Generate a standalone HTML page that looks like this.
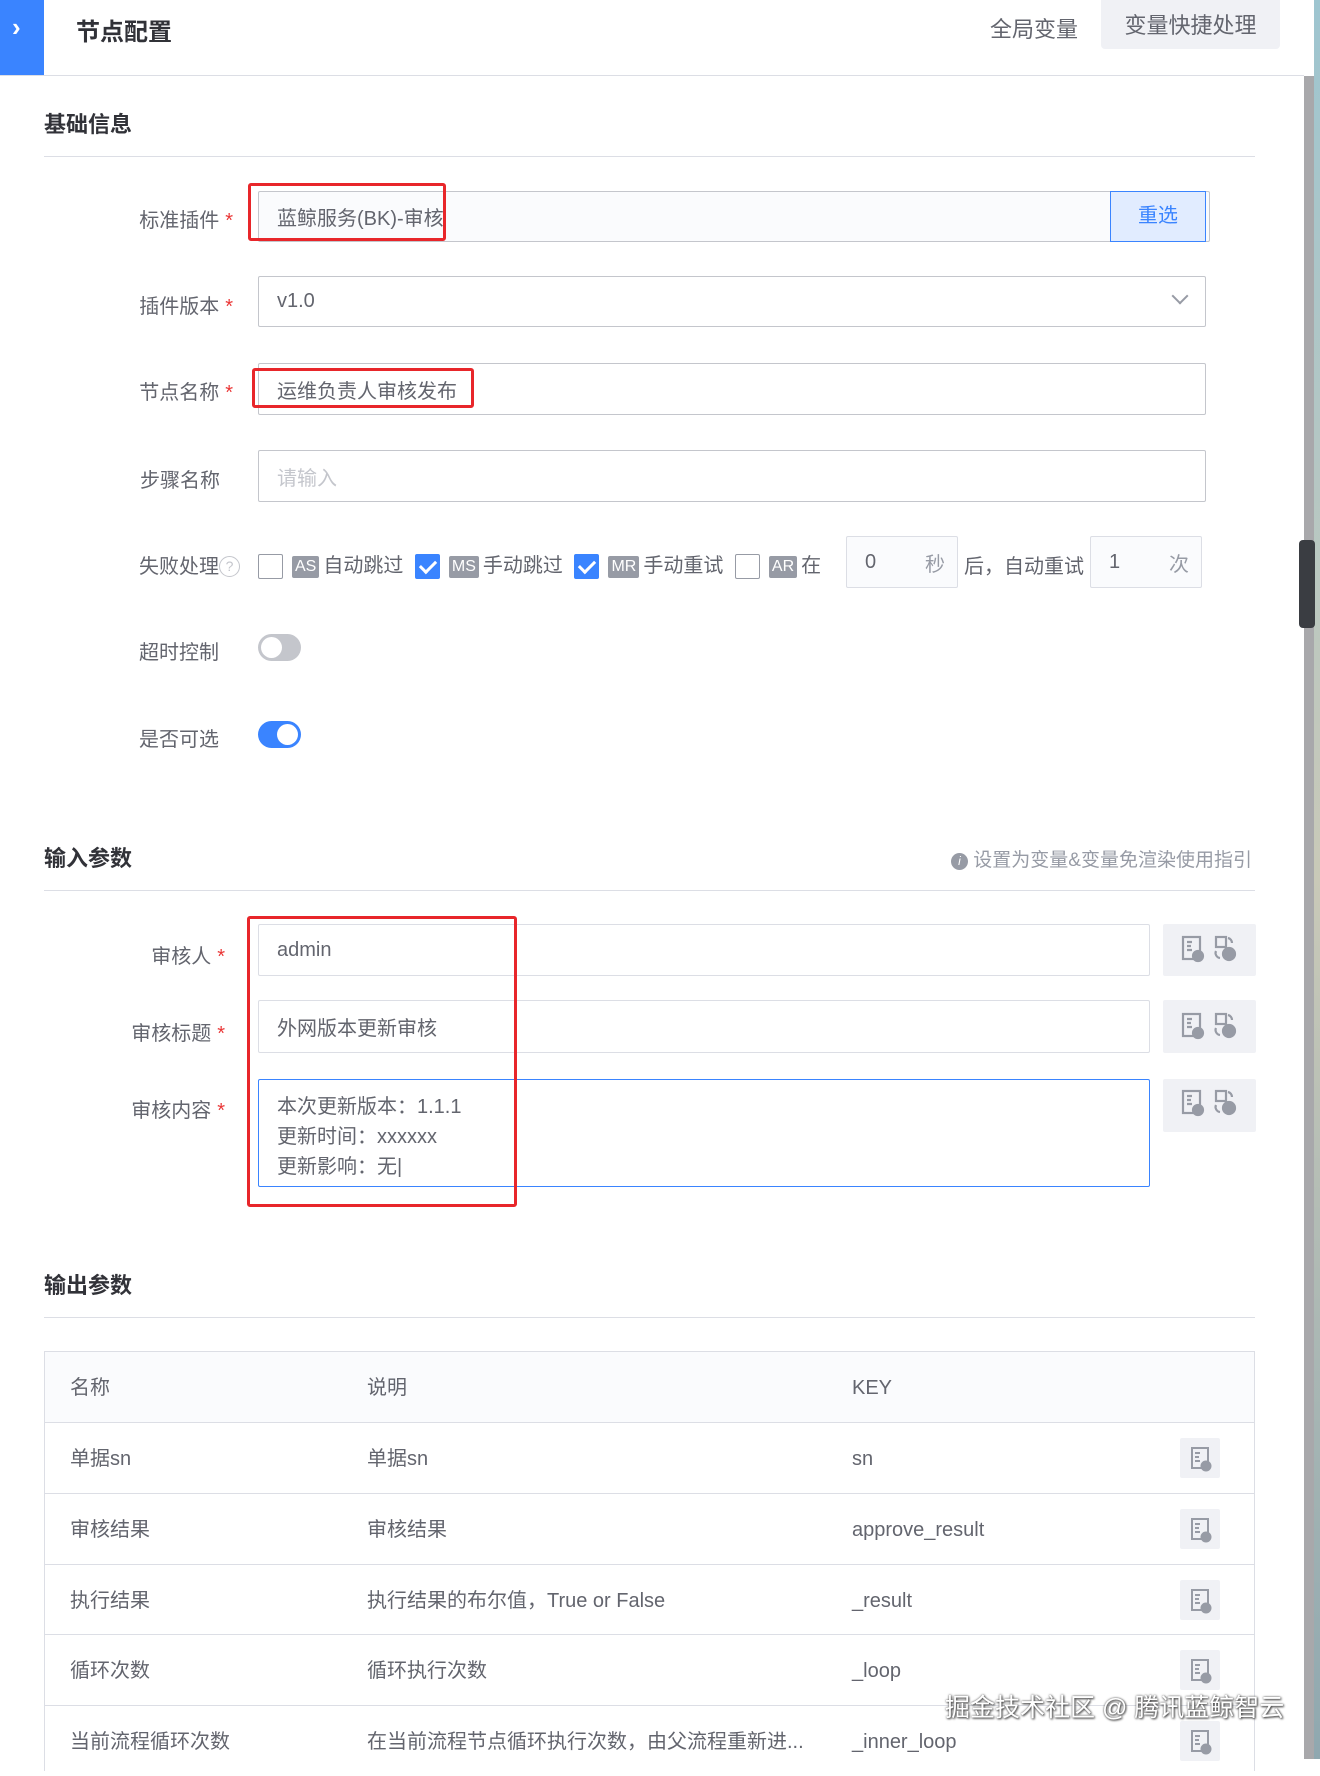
<!DOCTYPE html>
<html><head><meta charset="utf-8"><style>
*{box-sizing:border-box;margin:0;padding:0}
body{width:1320px;height:1759px;overflow:hidden;background:#fff;font-family:"Liberation Sans","Noto Sans CJK SC",sans-serif;color:#63656e;position:relative;font-size:20px}
.a{position:absolute}
.lbl{position:absolute;text-align:right;width:200px;font-size:20px;color:#63656e}
.req{color:#ea3636;margin-left:6px}
.inp{position:absolute;border:1px solid #c4c6cc;border-radius:2px;background:#fff;padding-left:18px;display:flex;align-items:center;font-size:20px;color:#63656e}
.h{position:absolute;font-weight:bold;font-size:22px;color:#313238}
.hr{position:absolute;left:44px;width:1211px;height:1px;background:#dcdee5}
.cb{display:inline-block;width:25px;height:25px;border:1px solid #979ba5;border-radius:2px;vertical-align:middle;background:#fff}
.cb.on{background:#3a84ff;border-color:#3a84ff;position:relative}
.cb.on:after{content:"";position:absolute;left:7px;top:2px;width:7px;height:13px;border:solid #fff;border-width:0 3px 3px 0;transform:rotate(45deg)}
.tag{display:inline-block;background:#979ba5;color:#fff;font-size:16px;border-radius:2px;padding:0 3px;line-height:22px;vertical-align:middle;margin:0 4px 0 9px}
.ib{position:absolute;left:1163px;width:93px;background:#f0f1f5;border-radius:2px}
.red{position:absolute;border:3px solid #e8262a;border-radius:3px}
.row{position:absolute;left:44px;width:1211px;height:71px;border-top:1px solid #dcdee5;font-size:20px}
.row span{position:absolute;top:22px;line-height:28px}
.tb{position:absolute;left:1136px;top:15px;width:40px;height:40px;background:#f0f1f5;border-radius:2px}
.tb svg{position:absolute;left:10px;top:8px}
</style></head><body>
<div class="a" style="left:0;top:0;width:44px;height:75px;background:#3a84ff;color:#fff;font-size:26px;font-weight:bold;padding:12px 0 0 12px">›</div>
<div class="a" style="left:76px;top:12px;font-size:24px;font-weight:bold;color:#313238">节点配置</div>
<div class="a" style="left:990px;top:12px;font-size:22px;color:#63656e">全局变量</div>
<div class="a" style="left:1101px;top:0;width:179px;height:49px;background:#f0f1f5;border-radius:0 0 4px 4px;font-size:22px;color:#63656e;text-align:center;line-height:52px">变量快捷处理</div>
<div class="a" style="left:0;top:75px;width:1304px;height:1px;background:#dcdee5"></div>
<div class="a" style="left:1304px;top:76px;width:10px;height:1683px;background:#a8a8ab"></div>
<div class="a" style="left:1314px;top:0;width:6px;height:1759px;background:linear-gradient(#9ec5d0,#c9c9b8 50%,#8fa8b0)"></div>
<div class="a" style="left:1299px;top:540px;width:16px;height:88px;background:#3a3d42;border-radius:4px"></div>

<div class="h" style="left:44px;top:107px">基础信息</div>
<div class="hr" style="top:156px"></div>

<div class="lbl" style="left:33px;top:204px">标准插件<span class="req">*</span></div>
<div class="inp" style="left:258px;top:191px;width:952px;height:51px;background:#fafbfd">蓝鲸服务(BK)-审核</div>
<div class="a" style="left:1110px;top:191px;width:96px;height:51px;background:#e1ecff;border:1px solid #3a84ff;color:#3a84ff;text-align:center;line-height:49px">重选</div>
<div class="red" style="left:248px;top:183px;width:198px;height:58px"></div>

<div class="lbl" style="left:33px;top:290px">插件版本<span class="req">*</span></div>
<div class="inp" style="left:258px;top:276px;width:948px;height:51px">v1.0</div>
<div class="a" style="left:1174px;top:290px;width:12px;height:12px;border:solid #979ba5;border-width:0 2px 2px 0;transform:rotate(45deg)"></div>

<div class="lbl" style="left:33px;top:376px">节点名称<span class="req">*</span></div>
<div class="inp" style="left:258px;top:363px;width:948px;height:52px">运维负责人审核发布</div>
<div class="red" style="left:252px;top:368px;width:222px;height:40px"></div>

<div class="lbl" style="left:20px;top:464px">步骤名称</div>
<div class="inp" style="left:258px;top:450px;width:948px;height:52px;color:#c4c6cc">请输入</div>

<div class="a" style="left:139px;top:550px">失败处理<span style="display:inline-block;width:21px;height:21px;border:1px solid #c4c6cc;border-radius:50%;font-size:14px;text-align:center;line-height:19px;color:#c4c6cc;vertical-align:2px">?</span></div>
<div class="a" style="left:258px;top:549px;white-space:nowrap"><span class="cb"></span><span class="tag">AS</span>自动跳过 <span class="cb on" style="margin-left:6px"></span><span class="tag">MS</span>手动跳过 <span class="cb on" style="margin-left:6px"></span><span class="tag">MR</span>手动重试 <span class="cb" style="margin-left:6px"></span><span class="tag">AR</span>在</div>
<div class="inp" style="left:846px;top:536px;width:112px;height:52px;background:#fafbfd;border-color:#dcdee5">0<span style="position:absolute;right:12px;color:#979ba5">秒</span></div>
<div class="a" style="left:964px;top:550px">后，自动重试</div>
<div class="inp" style="left:1090px;top:536px;width:112px;height:52px;background:#fafbfd;border-color:#dcdee5">1<span style="position:absolute;right:12px;color:#979ba5">次</span></div>

<div class="a" style="left:139px;top:636px">超时控制</div>
<div class="a" style="left:258px;top:634px;width:43px;height:27px;background:#c4c6cc;border-radius:14px"><div class="a" style="left:3px;top:3px;width:21px;height:21px;background:#fff;border-radius:50%"></div></div>
<div class="a" style="left:139px;top:723px">是否可选</div>
<div class="a" style="left:258px;top:721px;width:43px;height:27px;background:#3a84ff;border-radius:14px"><div class="a" style="left:19px;top:3px;width:21px;height:21px;background:#fff;border-radius:50%"></div></div>

<div class="h" style="left:44px;top:841px">输入参数</div>
<div class="a" style="left:951px;top:845px;font-size:19px;color:#979ba5;white-space:nowrap"><span style="display:inline-block;width:17px;height:17px;border-radius:50%;background:#979ba5;color:#fff;font-size:12px;text-align:center;line-height:17px;vertical-align:1px;font-style:italic">i</span> 设置为变量&amp;变量免渲染使用指引</div>
<div class="hr" style="top:890px"></div>

<div class="lbl" style="left:25px;top:940px">审核人<span class="req">*</span></div>
<div class="inp" style="left:258px;top:924px;width:892px;height:52px;border-color:#dcdee5">admin</div>
<div class="lbl" style="left:25px;top:1017px">审核标题<span class="req">*</span></div>
<div class="inp" style="left:258px;top:1000px;width:892px;height:53px;border-color:#dcdee5">外网版本更新审核</div>
<div class="lbl" style="left:25px;top:1094px">审核内容<span class="req">*</span></div>
<div class="inp" style="left:258px;top:1079px;width:892px;height:108px;border-color:#3a84ff;align-items:flex-start;padding-top:12px;line-height:30px">本次更新版本：1.1.1<br>更新时间：xxxxxx<br>更新影响：无|</div>
<div class="ib" style="top:924px;height:52px"></div>
<div class="ib" style="top:1000px;height:53px"></div>
<div class="ib" style="top:1079px;height:53px"></div>
<svg class="a" style="left:1180px;top:933px" width="60" height="240" fill="none" stroke="#979ba5" stroke-width="2.2">
<defs><g id="ic"><rect x="3" y="4" width="17" height="22"/><path d="M7 9h5M7 13h4M7 17h5"/><circle cx="18" cy="23" r="5" fill="#979ba5"/><rect x="36" y="4" width="10" height="10"/><path d="M48 5a5 5 0 0 1 4 5M36 18a5 5 0 0 0 4 7"/><circle cx="49" cy="21" r="6" fill="#979ba5"/></g>
<g id="ic2"><rect x="2" y="2" width="16" height="20"/><path d="M5 7h5M5 11h4M5 15h5"/><circle cx="16" cy="20" r="4.5" fill="#979ba5"/></g></defs>
<use href="#ic"/><use href="#ic" y="77"/><use href="#ic" y="154"/>
</svg>
<div class="red" style="left:247px;top:916px;width:270px;height:291px"></div>

<div class="h" style="left:44px;top:1268px">输出参数</div>
<div class="hr" style="top:1317px"></div>

<div class="a" style="left:44px;top:1351px;width:1211px;height:420px;border:1px solid #dcdee5;border-bottom:none"></div>
<div class="a" style="left:45px;top:1352px;width:1209px;height:70px;background:#fafbfd"></div>
<div class="a" style="left:70px;top:1374px;line-height:28px">名称</div><div class="a" style="left:367px;top:1374px;line-height:28px">说明</div><div class="a" style="left:852px;top:1374px;line-height:28px">KEY</div>
<div class="row" style="top:1422px"><span style="left:26px">单据sn</span><span style="left:323px">单据sn</span><span style="left:808px">sn</span><div class="tb"><svg width="22" height="26" fill="none" stroke="#979ba5" stroke-width="2"><use href="#ic2"/></svg></div></div>
<div class="row" style="top:1493px"><span style="left:26px">审核结果</span><span style="left:323px">审核结果</span><span style="left:808px">approve_result</span><div class="tb"><svg width="22" height="26" fill="none" stroke="#979ba5" stroke-width="2"><use href="#ic2"/></svg></div></div>
<div class="row" style="top:1564px"><span style="left:26px">执行结果</span><span style="left:323px">执行结果的布尔值，True or False</span><span style="left:808px">_result</span><div class="tb"><svg width="22" height="26" fill="none" stroke="#979ba5" stroke-width="2"><use href="#ic2"/></svg></div></div>
<div class="row" style="top:1634px"><span style="left:26px">循环次数</span><span style="left:323px">循环执行次数</span><span style="left:808px">_loop</span><div class="tb"><svg width="22" height="26" fill="none" stroke="#979ba5" stroke-width="2"><use href="#ic2"/></svg></div></div>
<div class="row" style="top:1705px"><span style="left:26px">当前流程循环次数</span><span style="left:323px">在当前流程节点循环执行次数，由父流程重新进...</span><span style="left:808px">_inner_loop</span><div class="tb"><svg width="22" height="26" fill="none" stroke="#979ba5" stroke-width="2"><use href="#ic2"/></svg></div></div>
<div class="a" style="left:945px;top:1688px;font-size:25px;color:#fff;text-shadow:0 0 2px #555,1px 1px 2px #333;white-space:nowrap">掘金技术社区 @ 腾讯蓝鲸智云</div>
</body></html>
